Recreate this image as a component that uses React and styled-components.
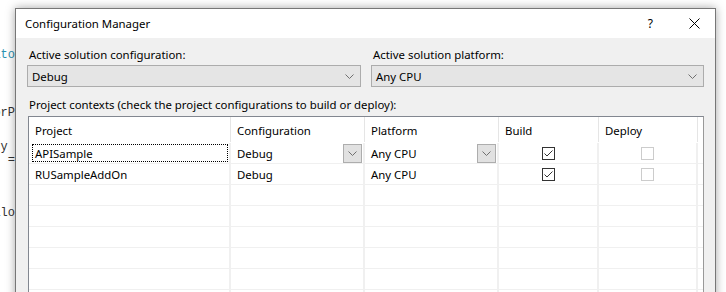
import React from "react";
import styled, { createGlobalStyle } from "styled-components";

const Global = createGlobalStyle`
  html, body { margin: 0; padding: 0; background: #ffffff; }
  body { font-family: "Noto Sans", "Segoe UI", sans-serif; }
`;

const Page = styled.div`
  display: flex;
  align-items: flex-start;
  width: 726px;
  height: 292px;
  overflow: hidden;
  background: #ffffff;
`;

const Editor = styled.div`
  width: 15px;
  flex-shrink: 0;
  display: flex;
  flex-direction: column;
  font-family: "Liberation Mono", monospace;
  font-size: 12px;
  line-height: 13px;
`;

const CodeLine = styled.div`
  display: flex;
  justify-content: flex-end;
  overflow: hidden;
  white-space: pre;
  margin-top: ${(p) => p.$gap}px;
  color: ${(p) => p.$color || "#333"};
`;

const Dialog = styled.div`
  width: 699px;
  flex-shrink: 0;
  margin-top: 8px;
  border: 1px solid #777;
  background: #f0f0f0;
  box-shadow: 0 0 9px rgba(0, 0, 0, 0.35);
  display: flex;
  flex-direction: column;
  font-size: 11.4px;
  color: #000;
`;

const TitleBar = styled.div`
  height: 29px;
  flex-shrink: 0;
  background: #fff;
  display: flex;
  align-items: center;
  padding-left: 9px;
  padding-right: 15px;
`;

const Title = styled.div`
  flex: 1;
`;

const TitleButtons = styled.div`
  display: flex;
  align-items: center;
  gap: 36px;
`;

const Help = styled.span`
  font-size: 12px;
`;

const Body = styled.div`
  flex-shrink: 0;
  padding: 9px 11px 0 11px;
  display: flex;
  flex-direction: column;
`;

const Fields = styled.div`
  display: grid;
  grid-template-columns: 334px 333px;
  column-gap: 10px;
`;

const Field = styled.div`
  display: flex;
  flex-direction: column;
  gap: 2px;
`;

const Label = styled.div`
  line-height: 16px;
  padding-left: 2px;
  margin-top: ${(p) => p.$top || 0}px;
`;

const Combo = styled.div`
  height: 20px;
  border: 1px solid #acacac;
  background: #e5e5e5;
  display: flex;
  align-items: center;
  padding: 0 6px 0 4px;
`;

const ComboText = styled.span`
  flex: 1;
`;

const Table = styled.div`
  margin: 3px 0 0 1px;
  border: 1px solid #828790;
  border-right-color: #999;
  background: #fff;
`;

const Row = styled.div`
  display: grid;
  grid-template-columns: 202px 134px 134px 100px 99px 1fr;
  height: ${(p) => (p.$header ? 25 : 20)}px;
  border-bottom: 1px solid ${(p) => (p.$header ? "transparent" : "#f0f0f0")};
`;

const HeadCell = styled.div`
  display: flex;
  align-items: center;
  padding-left: 6px;
  border-right: ${(p) => (p.$last ? "none" : "1px solid #e5e5e5")};
  padding-top: 1px;
`;

const Cell = styled.div`
  display: flex;
  align-items: center;
  justify-content: ${(p) => (p.$center ? "center" : "flex-start")};
  padding-left: ${(p) => (p.$center ? 0 : 6)}px;
  padding-right: ${(p) => p.$pr || 0}px;
  border-right: ${(p) => (p.$last ? "none" : "2px solid #f0f0f0")};
  box-sizing: border-box;
`;

const FocusCell = styled.div`
  flex: 1;
  height: 16px;
  margin: 0 1px 0 -3px;
  padding-left: 2px;
  border: 1px dotted #000;
  display: flex;
  align-items: center;
`;

const CellText = styled.span`
  flex: 1;
`;

const DropButton = styled.div`
  width: 17px;
  height: 17px;
  border: 1px solid #adadad;
  background: #e1e1e1;
  display: flex;
  align-items: center;
  justify-content: center;
`;

const CheckBox = styled.div`
  width: 11px;
  height: 11px;
  border: 1px solid ${(p) => (p.$disabled ? "#cccccc" : "#333333")};
  background: #fff;
  display: flex;
  align-items: center;
  justify-content: center;
`;

const Chevron = () => (
  <svg width="9" height="5" viewBox="0 0 9 5">
    <path d="M0.5 0.5 L4.5 4.5 L8.5 0.5" fill="none" stroke="#707070" strokeWidth="1" />
  </svg>
);

const Check = () => (
  <svg width="11" height="11" viewBox="0 0 11 11">
    <path d="M1.5 5.5 L4 8 L9.5 2.5" fill="none" stroke="#333" strokeWidth="1" />
  </svg>
);

const CloseIcon = () => (
  <svg width="11" height="11" viewBox="0 0 11 11">
    <path d="M0.5 0.5 L10.5 10.5 M10.5 0.5 L0.5 10.5" stroke="#000" strokeWidth="1" />
  </svg>
);

const projects = [
  { name: "APISample", config: "Debug", platform: "Any CPU", focus: true },
  { name: "RUSampleAddOn", config: "Debug", platform: "Any CPU" },
];

export default function App() {
  const empty = Array.from({ length: 7 });
  return (
    <>
      <Global />
      <Page>
        <Editor>
          <CodeLine $gap={49} $color="#2b91af">{"nito"}</CodeLine>
          <CodeLine $gap={45}>{"ctorP"}</CodeLine>
          <CodeLine $gap={21}>{"y "}</CodeLine>
          <CodeLine $gap={0}>{" ="}</CodeLine>
          <CodeLine $gap={40}>{"ello"}</CodeLine>
        </Editor>
        <Dialog>
          <TitleBar>
            <Title>Configuration Manager</Title>
            <TitleButtons>
              <Help>?</Help>
              <CloseIcon />
            </TitleButtons>
          </TitleBar>
          <Body>
            <Fields>
              <Field>
                <Label>Active solution configuration:</Label>
                <Combo>
                  <ComboText>Debug</ComboText>
                  <Chevron />
                </Combo>
              </Field>
              <Field>
                <Label>Active solution platform:</Label>
                <Combo>
                  <ComboText>Any CPU</ComboText>
                  <Chevron />
                </Combo>
              </Field>
            </Fields>
            <Label $top={10}>
              Project contexts (check the project configurations to build or deploy):
            </Label>
            <Table>
              <Row $header>
                <HeadCell>Project</HeadCell>
                <HeadCell>Configuration</HeadCell>
                <HeadCell>Platform</HeadCell>
                <HeadCell>Build</HeadCell>
                <HeadCell>Deploy</HeadCell>
                <HeadCell $last />
              </Row>
              {projects.map((p) => (
                <Row key={p.name}>
                  <Cell>
                    {p.focus ? <FocusCell>{p.name}</FocusCell> : p.name}
                  </Cell>
                  <Cell $pr={1}>
                    <CellText>{p.config}</CellText>
                    {p.focus && (
                      <DropButton>
                        <Chevron />
                      </DropButton>
                    )}
                  </Cell>
                  <Cell $pr={1}>
                    <CellText>{p.platform}</CellText>
                    {p.focus && (
                      <DropButton>
                        <Chevron />
                      </DropButton>
                    )}
                  </Cell>
                  <Cell $center>
                    <CheckBox>
                      <Check />
                    </CheckBox>
                  </Cell>
                  <Cell $center>
                    <CheckBox $disabled />
                  </Cell>
                  <Cell $last />
                </Row>
              ))}
              {empty.map((_, i) => (
                <Row key={i}>
                  <Cell />
                  <Cell />
                  <Cell />
                  <Cell />
                  <Cell />
                  <Cell $last />
                </Row>
              ))}
            </Table>
          </Body>
        </Dialog>
      </Page>
    </>
  );
}
